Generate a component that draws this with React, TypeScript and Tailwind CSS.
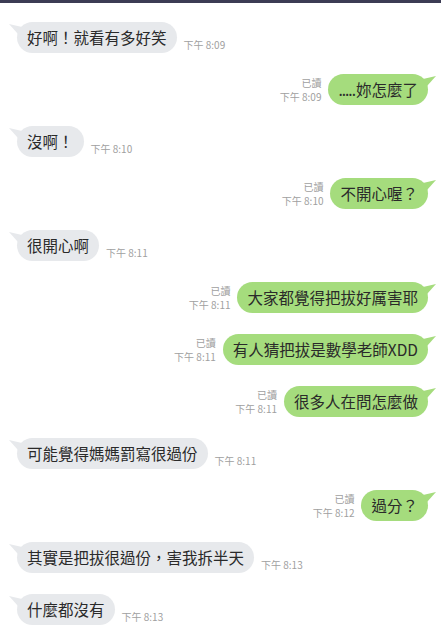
import React from 'react'

interface Message {
  id: number
  text: string
  time: string
  mine: boolean
}

const messages: Message[] = [
  { id: 1, text: '好啊！就看有多好笑', time: '下午 8:09', mine: false },
  { id: 2, text: '.....妳怎麼了', time: '下午 8:09', mine: true },
  { id: 3, text: '沒啊！', time: '下午 8:10', mine: false },
  { id: 4, text: '不開心喔？', time: '下午 8:10', mine: true },
  { id: 5, text: '很開心啊', time: '下午 8:11', mine: false },
  { id: 6, text: '大家都覺得把拔好厲害耶', time: '下午 8:11', mine: true },
  { id: 7, text: '有人猜把拔是數學老師XDD', time: '下午 8:11', mine: true },
  { id: 8, text: '很多人在問怎麼做', time: '下午 8:11', mine: true },
  { id: 9, text: '可能覺得媽媽罰寫很過份', time: '下午 8:11', mine: false },
  { id: 10, text: '過分？', time: '下午 8:12', mine: true },
  { id: 11, text: '其實是把拔很過份，害我拆半天', time: '下午 8:13', mine: false },
  { id: 12, text: '什麼都沒有', time: '下午 8:13', mine: false },
]

const font = { fontFamily: '"Noto Sans CJK TC", "Liberation Sans", sans-serif' }

function Bubble({ text, mine }: { text: string; mine: boolean }) {
  return (
    <div
      className={`relative h-[31px] rounded-[16px] px-[10px] flex items-center text-[15.5px] leading-none text-[#2a2a2a] whitespace-nowrap ${
        mine ? 'bg-[#a5dc7d]' : 'bg-[#e7e9ec]'
      }`}
    >
      {mine ? (
        <svg className="absolute -right-[9px] top-[2px]" width="14" height="10" viewBox="0 0 14 10">
          <path d="M0 3 L13 0 L4 10 Z" fill="#a5dc7d" />
        </svg>
      ) : (
        <svg className="absolute -left-[9px] top-[2px]" width="14" height="10" viewBox="0 0 14 10">
          <path d="M14 3 L1 0 L10 10 Z" fill="#e7e9ec" />
        </svg>
      )}
      {text.startsWith('.....') ? (
        <>
          <span className="tracking-[-1px] mr-[1px]">.....</span>
          {text.slice(5)}
        </>
      ) : (
        text
      )}
    </div>
  )
}

export default function App() {
  return (
    <div className="w-[441px] h-[640px] bg-white overflow-hidden" style={font}>
      <div className="h-[3px] bg-[#3c3c54]" />
      <div className="flex flex-col gap-[21px] pt-[19px]">
        {messages.map(m =>
          m.mine ? (
            <div key={m.id} className="flex justify-end items-center pr-[13px] gap-[7px]">
              <div className="flex flex-col items-end text-[10px] leading-[14px] text-[#a0a0a0]">
                <span>已讀</span>
                <span>{m.time}</span>
              </div>
              <Bubble text={m.text} mine />
            </div>
          ) : (
            <div key={m.id} className="flex items-end pl-[17px] gap-[7px]">
              <Bubble text={m.text} mine={false} />
              <span className="text-[10px] leading-[14px] pb-[1px] text-[#a0a0a0]">{m.time}</span>
            </div>
          )
        )}
      </div>
    </div>
  )
}
